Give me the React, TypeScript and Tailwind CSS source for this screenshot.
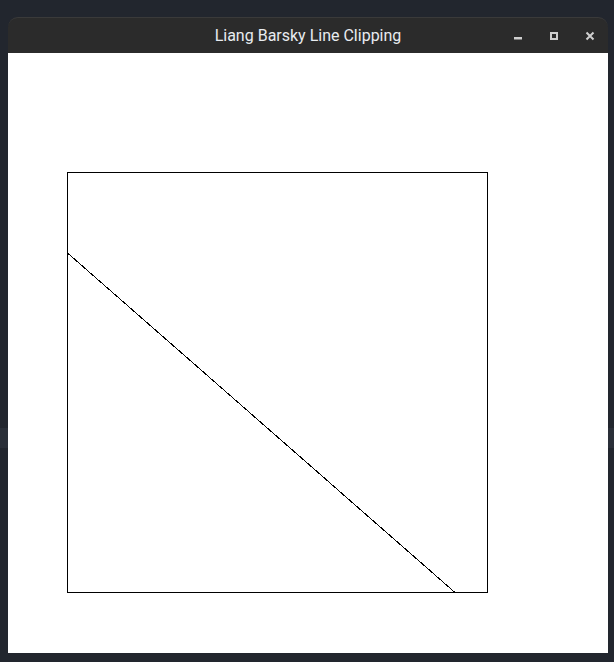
export default function App() {
  return (
    <div className="relative w-[614px] h-[662px] bg-[linear-gradient(to_bottom,#22262e_0,#22262e_428px,#2a2f38_428px,#2a2f38_448px,#22262e_448px)] pl-[8px] pt-[17px] font-['Roboto',sans-serif]">
      <div className="w-[600px] flex flex-col">
        {/* Title bar */}
        <div className="relative h-[36px] rounded-t-[10px] bg-[#2b2b2b] border-t border-[#3a3a3a] flex items-center justify-center">
          <span className="text-[16px] text-[#e8ecf0] leading-none">Liang Barsky Line Clipping</span>
          <div className="absolute right-0 top-0 h-full flex items-center">
            <div className="w-[36px] h-full flex items-center justify-center">
              <svg width="10" height="10" viewBox="0 0 10 10">
                <rect x="1" y="6" width="8" height="2.5" fill="#cfcfcf" />
              </svg>
            </div>
            <div className="w-[36px] h-full flex items-center justify-center">
              <svg width="10" height="10" viewBox="0 0 10 10">
                <rect x="2" y="2" width="6" height="6" fill="none" stroke="#cfcfcf" strokeWidth="2" />
              </svg>
            </div>
            <div className="w-[36px] h-full flex items-center justify-center">
              <svg width="10" height="10" viewBox="0 0 10 10">
                <path d="M1.5 1.5 L8.5 8.5 M8.5 1.5 L1.5 8.5" stroke="#cfcfcf" strokeWidth="2" />
              </svg>
            </div>
          </div>
        </div>
        {/* Canvas */}
        <div className="h-[600px] bg-white">
          <svg width="600" height="600" viewBox="0 0 600 600" shapeRendering="crispEdges">
            <rect x="59.5" y="119.5" width="420" height="420" fill="none" stroke="#000" strokeWidth="1" />
            <line x1="59.5" y1="200" x2="447" y2="539.5" stroke="#000" strokeWidth="1" />
          </svg>
        </div>
      </div>
    </div>
  );
}
